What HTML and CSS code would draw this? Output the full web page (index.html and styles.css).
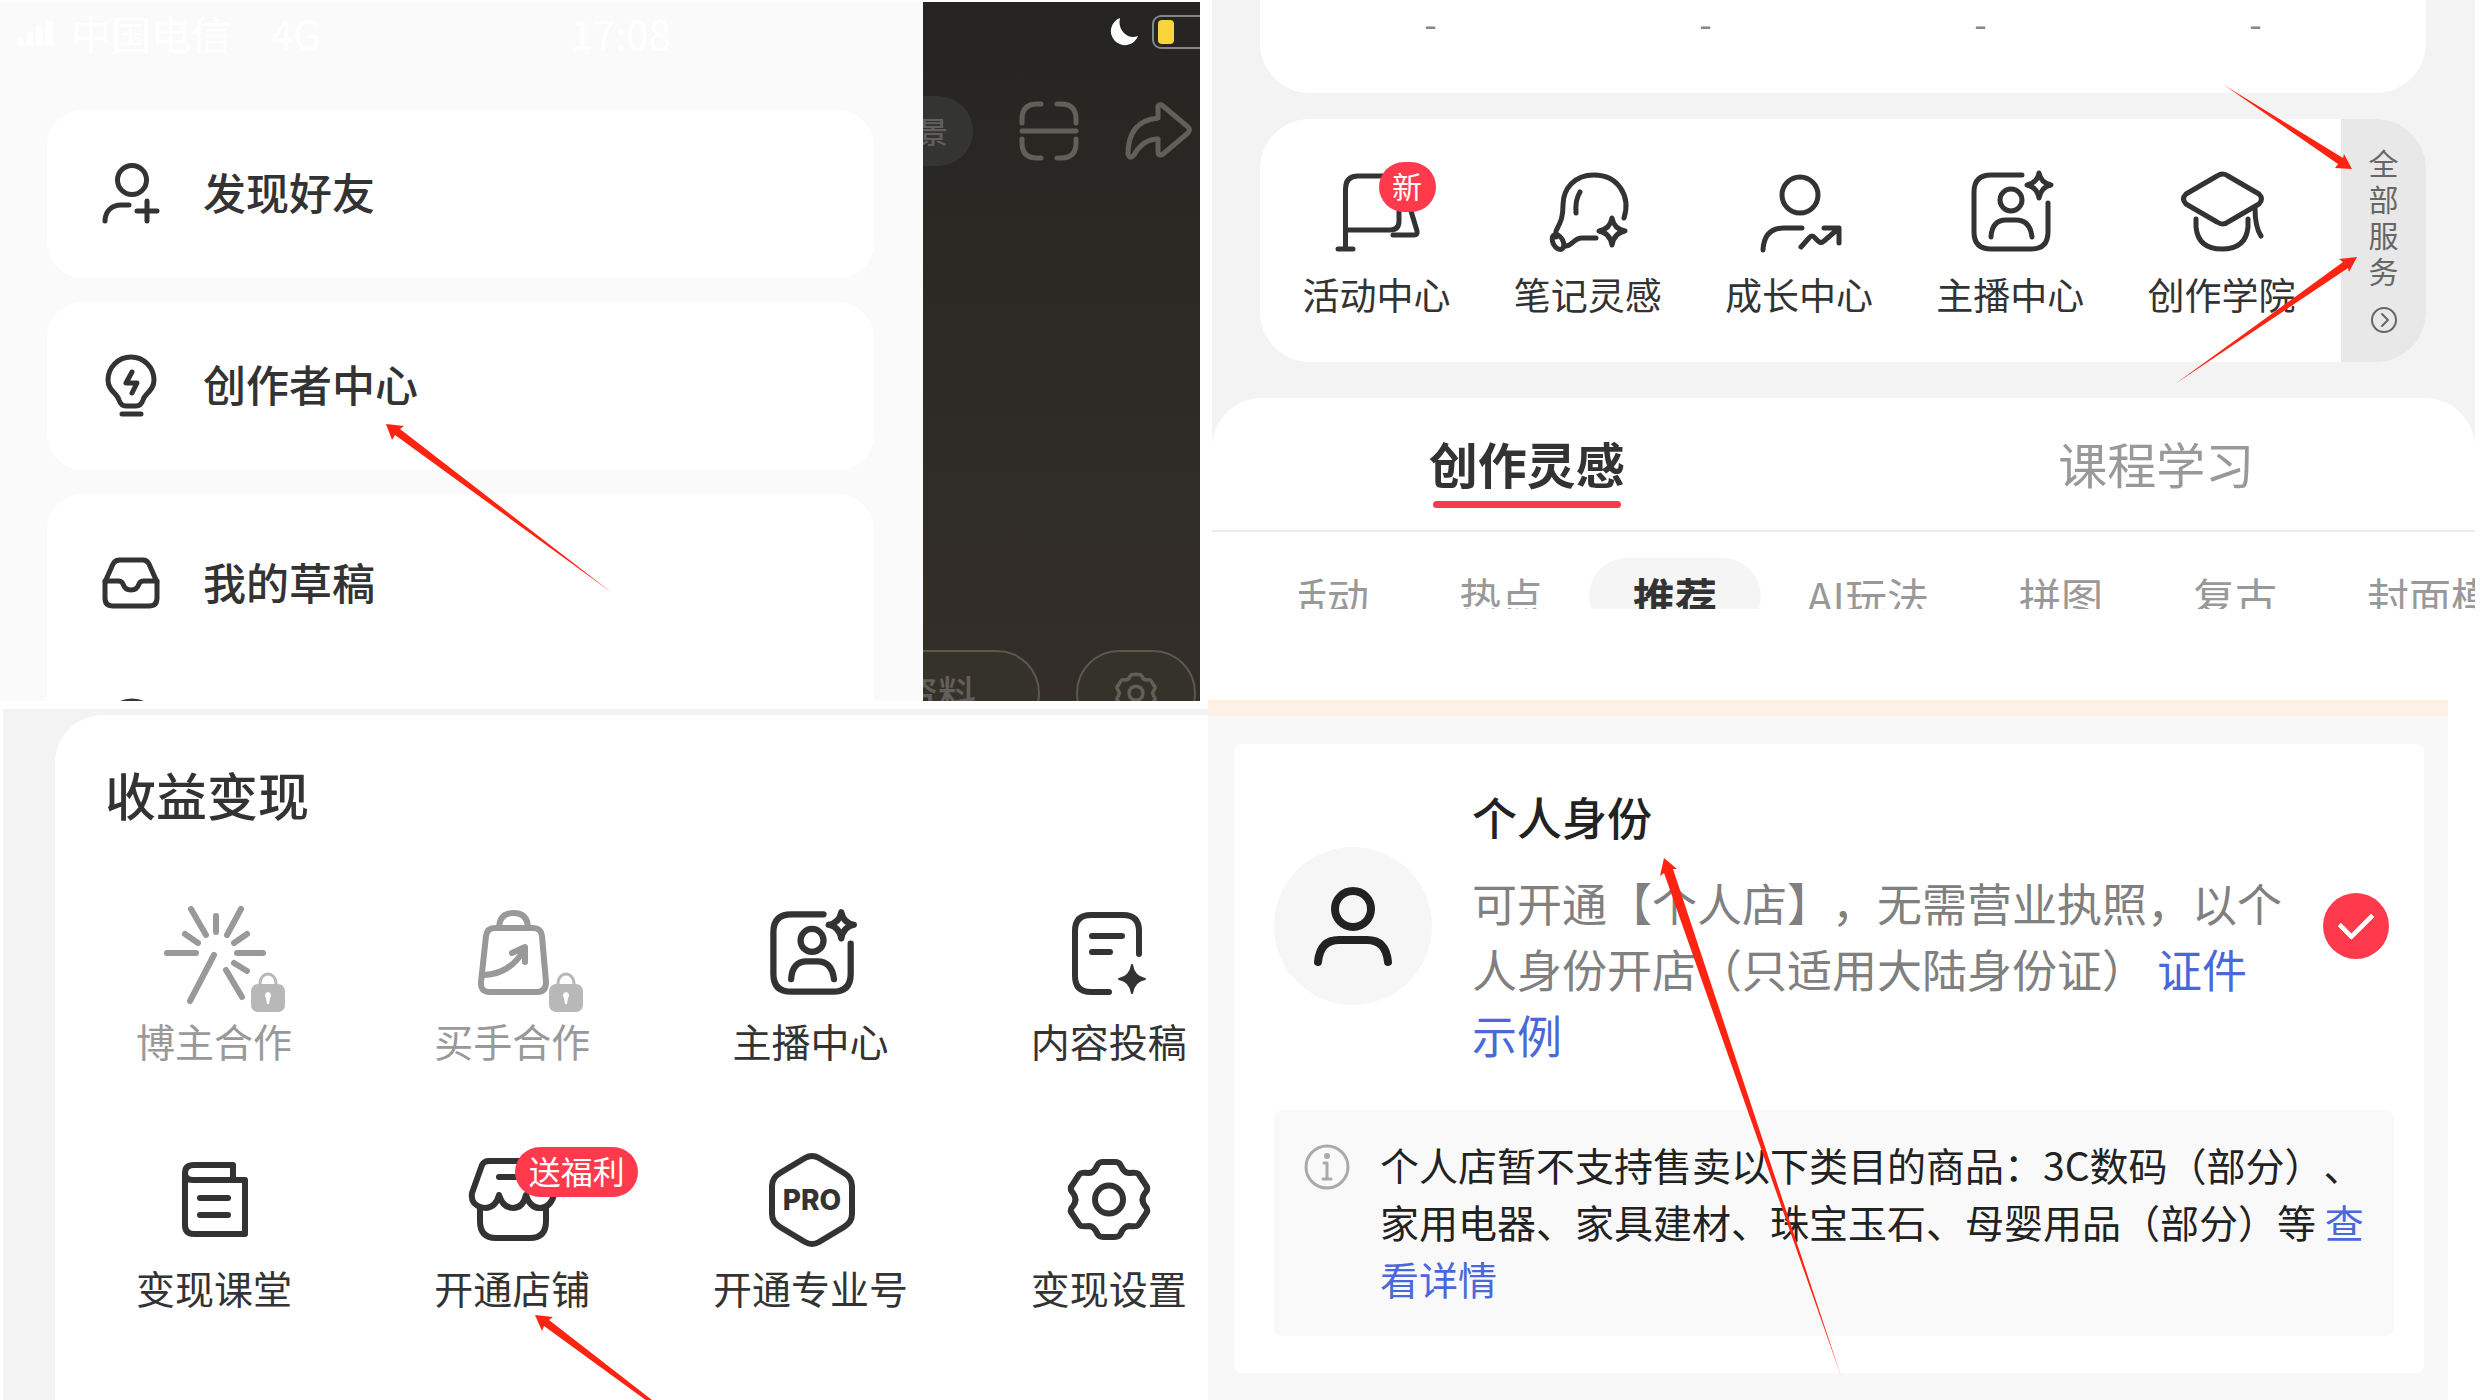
FILE: index.html
```html
<!DOCTYPE html>
<html lang="zh-CN">
<head>
    <meta charset="UTF-8">
    <meta name="viewport" content="width=device-width, initial-scale=1.0">
    <title>开通店铺流程</title>
    <link rel="stylesheet" href="styles.css">
</head>
<body>
<svg class="sprite" aria-hidden="true">
    <symbol id="icon-anchor" viewBox="0 0 90 90">
        <path d="M57 8H26Q9 8 9 25V65Q9 82 26 82H66Q83 82 83 65V36"/>
        <path d="M74 6Q76 16 86 18Q76 20 74 31Q72 20 62 18Q72 16 74 6Z"/>
        <circle cx="46" cy="33" r="11"/>
        <path d="M26 70Q27 53 41 53H51Q65 53 67 70"/>
    </symbol>
    <symbol id="icon-gear" viewBox="0 0 100 100">
        <path d="M44 13H56Q60 13 61.500 16Q65 24 70 24Q78 23 79.500 25L88 38Q89 41 86 44Q81 50.500 86 57Q89 60 88 63L79.500 76Q78 78 70 77Q65 77 61.500 85Q60 88 56 88H44Q40 88 38.500 85Q35 77 30 77Q22 78 20.500 76L12 63Q11 60 14 57Q19 50.500 14 44Q11 41 12 38L20.500 25Q22 23 30 24Q35 24 38.500 16Q40 13 44 13Z"/>
        <circle cx="50" cy="50.500" r="14"/>
    </symbol>
    <symbol id="icon-lock" viewBox="0 0 34 40">
        <path d="M9 14V11a8 9 0 0 1 16 0v3" fill="none" stroke="#b8b8b8" stroke-width="3"/>
        <rect x="0" y="12" width="34" height="28" rx="7" fill="#b8b8b8" stroke="none"/>
        <path d="M17 20a3.500 3.500 0 0 1 2 6l-1 6h-2l-1-6a3.500 3.500 0 0 1 2-6z" fill="#fff" stroke="none"/>
    </symbol>
</svg>

<div class="page">
    <div class="column column-left">
        <!-- Side menu over the profile page -->
        <section class="profile">
            <div class="drawer">
                <div class="drawer-status">
                    <svg class="signal" viewBox="0 0 40 26"><path d="M0 18h7v8H0zM10 12h7v14h-7zM20 6h7v20h-7zM30 0h8v26h-8z"/></svg>
                    <span>中国电信</span>
                    <span>4G</span>
                    <span class="drawer-time">17:08</span>
                </div>
                <nav class="menu">
                    <div class="menu-card">
                        <a href="#" class="menu-row">
                            <svg class="icon" viewBox="0 0 60 62">
                                <circle cx="31" cy="17" r="14.500"/>
                                <path d="M4 58C4 48 11 42 20 42H28M46 38V58M36 48H56"/>
                            </svg>
                            <span>发现好友</span>
                        </a>
                    </div>
                    <div class="menu-card">
                        <a href="#" class="menu-row">
                            <svg class="icon" viewBox="0 0 60 62">
                                <path d="M18 45C16 38 7 36 7 25A23 23 0 0 1 53 25C53 36 44 38 42 45Q40 51 35 51H25Q20 51 18 45Z"/>
                                <path d="M21 59H40M31 17L25 28H36L31 38"/>
                            </svg>
                            <span>创作者中心</span>
                        </a>
                    </div>
                    <div class="menu-card menu-card-list">
                        <a href="#" class="menu-row">
                            <svg class="icon" viewBox="0 0 60 62">
                                <path d="M19 7H42Q46 7 48 11L56 29V45Q56 53 48 53H12Q4 53 4 45V29L12 11Q14 7 19 7Z"/>
                                <path d="M4 28H17Q21 28 22 31Q24 37 30 37T38 31Q39 28 43 28H56"/>
                            </svg>
                            <span>我的草稿</span>
                        </a>
                        <a href="#" class="menu-row" aria-label="评论">
                            <svg class="icon" viewBox="0 0 60 62"><circle cx="31" cy="31" r="27"/></svg>
                        </a>
                    </div>
                </nav>
            </div>
            <div class="cover">
                <div class="cover-status">
                    <svg class="moon" viewBox="0 0 28 28"><path d="M10 0A14 14 0 1 0 28 18Q20 21 14 15Q8 9 10 0Z"/></svg>
                    <span class="battery"><span class="battery-level"></span></span>
                </div>
                <div class="cover-actions">
                    <button class="cover-scene">景</button>
                    <svg class="cover-icon" viewBox="0 0 60 60">
                        <path d="M3 22V18Q3 3 18 3H22M38 3H42Q57 3 57 18V22M3 38V42Q3 57 18 57H22M38 57H42Q57 57 57 42V38M3 30H57"/>
                    </svg>
                    <svg class="cover-icon cover-share" viewBox="0 0 68 60">
                        <path d="M33 5Q35 2 38 5L63 26Q66 29 63 32L38 53Q33 56 33 50V38Q18 38 9 54Q5 59 3 53Q3 20 33 17Z"/>
                    </svg>
                </div>
                <div class="cover-bottom">
                    <button class="cover-edit">资料</button>
                    <button class="cover-settings" aria-label="设置">
                        <svg class="cover-gear"><use href="#icon-gear"/></svg>
                    </button>
                </div>
            </div>
        </section>

        <!-- Monetisation tools -->
        <section class="income">
            <div class="income-card">
                <h2>收益变现</h2>
                <div class="income-grid">
                    <a href="#" class="tool tool-locked">
                        <svg class="icon" viewBox="0 0 100 100">
                            <path d="M27 7L42 33M52 14V30M77 7L63 33M21 32L34 41M83 32L70 41M3 51H32M73 51H99M50 53L26 99M62 68L78 95M70 61L83 69"/>
                            <use href="#icon-lock" x="87" y="70" width="34" height="40"/>
                        </svg>
                        博主合作
                    </a>
                    <a href="#" class="tool tool-locked">
                        <svg class="icon" viewBox="0 0 100 100">
                            <path d="M33 26H71Q79 26 80 34L84 80Q84 90 75 90H28Q18 90 19 80L24 34Q25 26 33 26Z"/>
                            <path d="M37 25Q38 11 51.500 11T66 25M22 73Q48 72 62 48M50 51L63 45V60"/>
                            <use href="#icon-lock" x="87" y="70" width="34" height="40"/>
                        </svg>
                        买手合作
                    </a>
                    <a href="#" class="tool">
                        <svg class="icon" viewBox="0 0 100 100"><use href="#icon-anchor" x="3" y="4" width="94" height="94"/></svg>
                        主播中心
                    </a>
                    <a href="#" class="tool">
                        <svg class="icon" viewBox="0 0 100 100">
                            <path d="M80 52V29Q80 13 64 13H32Q16 13 16 29V74Q16 90 32 90H50M33 34H63M33 50H51"/>
                            <path class="solid" d="M73 63Q75 75 86 77Q75 79 73 91Q71 79 60 77Q71 75 73 63Z"/>
                        </svg>
                        内容投稿
                    </a>
                    <a href="#" class="tool">
                        <svg class="icon" viewBox="0 0 100 100">
                            <path d="M29 31H81V85H30Q21 85 21 76V24Q21 16 30 16H69V31M21 24Q21 31 29 31M36 49H64M36 66H64"/>
                        </svg>
                        变现课堂
                    </a>
                    <a href="#" class="tool">
                        <span class="icon-box">
                            <svg class="icon" viewBox="0 0 100 100">
                                <path d="M92 46L82 16Q80 12 76 12H27Q22 12 20 16L10 44Q9 50 12 54Q17 59 24 59Q34 58 37 46Q41 59 51 59T64 46Q68 59 78 59T92 46M37 28H65"/>
                                <path d="M18 59V72Q18 89 34 89H68Q84 89 84 72V59"/>
                            </svg>
                            <span class="badge badge-wide">送福利</span>
                        </span>
                        开通店铺
                    </a>
                    <a href="#" class="tool">
                        <svg class="icon" viewBox="0 0 100 100">
                            <path d="M44 9Q51 5 58 9L83 24Q91 29 91 37V65Q91 73 83 78L58 93Q51 97 44 93L19 78Q11 73 11 65V37Q11 29 19 24Z"/>
                            <text class="pro" x="51" y="61">PRO</text>
                        </svg>
                        开通专业号
                    </a>
                    <a href="#" class="tool">
                        <svg class="icon"><use href="#icon-gear"/></svg>
                        变现设置
                    </a>
                </div>
            </div>
        </section>
    </div>

    <div class="column column-right">
        <!-- Creator centre -->
        <section class="creator">
            <div class="stats">
                <span>-</span><span>-</span><span>-</span><span>-</span>
            </div>
            <div class="services">
                <div class="services-list">
                    <a href="#" class="service">
                        <span class="icon-box">
                            <svg class="icon" viewBox="0 0 90 90">
                                <path d="M13.500 80V22Q13.500 9 26 9H60M13.500 63H58Q67 63 67 54V36M79 44L85 64Q86 68 82 68H61M6 82H21"/>
                            </svg>
                            <span class="badge">新</span>
                        </span>
                        活动中心
                    </a>
                    <a href="#" class="service">
                        <svg class="icon" viewBox="0 0 90 90">
                            <path d="M81 51C88 29 75 8 51 8C31 8 20 22 20 38C20 52 17 56 13 64V70M37 25Q32 33 33 46M22 79C29 80 30 71 39 71H53"/>
                            <ellipse cx="15" cy="75" rx="5" ry="8" transform="rotate(-28 15 75)"/>
                            <path d="M69 51Q71 62 82 64Q71 66 69 78Q67 66 56 64Q67 62 69 51Z"/>
                        </svg>
                        笔记灵感
                    </a>
                    <a href="#" class="service">
                        <svg class="icon" viewBox="0 0 90 90">
                            <circle cx="46" cy="28" r="18"/>
                            <path d="M9 83Q10 61 30 61H48M47 80L55 71Q58 67 61 71L64 74Q67 77 70 74L84 62M70 61H85V76"/>
                        </svg>
                        成长中心
                    </a>
                    <a href="#" class="service">
                        <svg class="icon"><use href="#icon-anchor"/></svg>
                        主播中心
                    </a>
                    <a href="#" class="service">
                        <svg class="icon" viewBox="0 0 90 90">
                            <path d="M41 9Q47 5 52 9L83 27Q88 32 83 37L52 55Q47 59 41 55L10 37Q5 32 10 27Z"/>
                            <path d="M20 52V60Q22 82 46 82T72 60V52M79 41Q79 60 85 69"/>
                        </svg>
                        创作学院
                    </a>
                </div>
                <button class="services-all">
                    <span>全部服务</span>
                    <svg viewBox="0 0 28 28"><circle cx="14" cy="14" r="12"/><path d="M12 8L18 14L12 20"/></svg>
                </button>
            </div>
            <div class="feed">
                <div class="feed-tabs">
                    <button class="feed-tab active">创作灵感</button>
                    <button class="feed-tab">课程学习</button>
                </div>
                <div class="topics">
                    <div class="topics-track">
                        <button class="topic">活动</button>
                        <button class="topic">热点</button>
                        <button class="topic active">推荐</button>
                        <button class="topic">AI玩法</button>
                        <button class="topic">拼图</button>
                        <button class="topic">复古</button>
                        <button class="topic">封面模板</button>
                    </div>
                </div>
            </div>
        </section>

        <!-- Shop identity -->
        <section class="identity">
            <div class="identity-card">
                <div class="identity-main">
                    <div class="avatar">
                        <svg viewBox="0 0 80 80">
                            <circle cx="40" cy="23" r="18"/>
                            <path d="M5 76Q7 54 26 54H54Q73 54 75 76"/>
                        </svg>
                    </div>
                    <div class="identity-text">
                        <label for="personal">个人身份</label>
                        <p>可开通【个人店】，无需营业执照，以个人身份开店（只适用大陆身份证） <a href="#">证件示例</a></p>
                    </div>
                    <input type="radio" id="personal" name="identity" class="check" checked>
                </div>
                <div class="notice">
                    <svg viewBox="0 0 46 46"><circle cx="23" cy="23" r="21"/><path d="M20 19H23V34M19 35H27"/><circle class="dot" cx="23" cy="12" r="3"/></svg>
                    <p>个人店暂不支持售卖以下类目的商品：3C数码（部分）、家用电器、家具建材、珠宝玉石、母婴用品（部分）等 <a href="#">查看详情</a></p>
                </div>
            </div>
        </section>
    </div>

    <!-- Red pointers between the steps -->
    <svg class="pointers" viewBox="0 0 2480 1400" preserveAspectRatio="none" aria-hidden="true">
        <path d="M386 424L404 426L400 429L611 592L395 435L392 440Z"/>
        <path d="M2352 169L2344 154L2343 158L2224 85L2338 164L2335 168Z"/>
        <path d="M2357 257L2349 272L2348 268L2175 384L2343 262L2339 259Z"/>
        <path d="M535 1315L553 1317L549 1320L746 1473L544 1326L542 1331Z"/>
        <path d="M1664 858L1677 869L1673 869L1841 1376L1664 873L1660 876Z"/>
    </svg>
</div>
</body>
</html>
```
FILE: styles.css
```css
* {
    box-sizing: border-box;
}

body {
    margin: 0;
    background: #fff;
    color: #333;
    font-family: "Noto Sans CJK SC", "Noto Sans", sans-serif;
    text-spacing-trim: space-all;
}

a {
    color: inherit;
    text-decoration: none;
}

button {
    padding: 0;
    border: none;
    background: none;
    color: inherit;
    font: inherit;
}

h2,
p {
    margin: 0;
}

svg {
    display: block;
    flex-shrink: 0;
    fill: none;
    stroke: currentColor;
    stroke-linecap: round;
    stroke-linejoin: round;
}

.sprite {
    position: absolute;
    width: 0;
    height: 0;
}

.page {
    position: relative;
    display: grid;
    grid-template-columns: 1208fr 1272fr;
    height: 100vh;
    overflow: hidden;
}

.column {
    display: grid;
    grid-template-columns: minmax(0, 1fr);
    min-width: 0;
    min-height: 0;
}

.column-left {
    grid-template-rows: minmax(0, 701fr) minmax(0, 691fr);
    gap: 8px;
}

.column-right {
    grid-template-rows: minmax(0, 609fr) minmax(0, 700fr);
    gap: 91px;
}

.icon {
    width: 100%;
    height: 100%;
    overflow: visible;
}

.icon-box {
    position: relative;
}

.badge {
    position: absolute;
    top: -5px;
    left: 47px;
    width: 57px;
    padding-bottom: 4px;
    border-radius: 26px;
    background: #ff3a4c;
    color: #fff;
    font-size: 30px;
    line-height: 46px;
    text-align: center;
}

.badge-wide {
    top: -2px;
    left: 53px;
    width: 123px;
    font-size: 32px;
}

/* Side menu */
.profile {
    display: grid;
    grid-template-columns: minmax(0, 923fr) minmax(0, 277fr);
    grid-template-rows: minmax(0, 1fr);
    margin: 2px 8px 0 0;
    overflow: hidden;
}

.drawer {
    padding: 0 49px 0 47px;
    background: #fafafa;
}

.drawer-status {
    display: flex;
    align-items: center;
    gap: 40px;
    height: 108px;
    margin: 0 0 0 -30px;
    padding-bottom: 46px;
    color: #fff;
    font-size: 40px;
}

.signal {
    width: 38px;
    height: 26px;
    margin-right: -24px;
    fill: #fff;
    stroke: none;
}

.drawer-time {
    margin-left: 210px;
}

.menu {
    display: flex;
    flex-direction: column;
    gap: 24px;
}

.menu-card {
    padding: 12px 0;
    border-radius: 36px;
    background: #fff;
}

.menu-card-list {
    padding-top: 18px;
}

.menu-row {
    display: flex;
    align-items: center;
    gap: 42px;
    height: 144px;
    padding-left: 54px;
    font-size: 43px;
    font-weight: 500;
}

.menu-row span {
    padding-bottom: 6px;
}

.menu-row .icon {
    width: 60px;
    height: 62px;
    stroke-width: 5;
}

/* Dimmed cover next to the menu */
.cover {
    display: flex;
    flex-direction: column;
    overflow: hidden;
    background: linear-gradient(#252422, #2d2a25 45%, #332e28);
    color: #625f5b;
}

.cover-status {
    display: flex;
    align-items: center;
    gap: 14px;
    height: 60px;
    padding-left: 187px;
}

.moon {
    width: 28px;
    height: 28px;
    fill: #fff;
    stroke: none;
}

.battery {
    flex-shrink: 0;
    width: 74px;
    height: 34px;
    padding: 3px 4px;
    border: 2px solid #858585;
    border-radius: 9px;
}

.battery-level {
    display: block;
    width: 16px;
    height: 24px;
    border-radius: 4px;
    background: #f8d53b;
}

.cover-actions {
    display: flex;
    align-items: center;
    gap: 46px;
    margin-top: 34px;
}

.cover-scene {
    display: flex;
    flex-shrink: 0;
    align-items: center;
    justify-content: flex-end;
    width: 50px;
    height: 70px;
    padding: 0 25px 3px 0;
    border-radius: 0 35px 35px 0;
    background: #343432;
    font-size: 30px;
    font-weight: 500;
}

.cover-icon {
    width: 60px;
    height: 60px;
    stroke-width: 5;
}

.cover-share {
    width: 68px;
}

.cover-bottom {
    display: flex;
    justify-content: space-between;
    height: 51px;
    margin-top: auto;
    padding-right: 4px;
}

.cover-edit,
.cover-settings {
    display: flex;
    align-items: center;
    justify-content: flex-end;
    width: 117px;
    height: 86px;
    padding: 0 62px 4px 0;
    border: 2px solid #5a5852;
    border-left: none;
    border-radius: 0 60px 60px 0;
    background: #35322a;
    font-size: 38px;
    font-weight: 500;
    white-space: nowrap;
}

.cover-settings {
    justify-content: center;
    width: 120px;
    padding: 0;
    border-left: 2px solid #5a5852;
    border-radius: 60px;
}

.cover-gear {
    width: 50px;
    height: 50px;
    stroke-width: 7;
}

/* Monetisation tools */
.income {
    margin-left: 3px;
    padding: 6px 0 0 52px;
    overflow: hidden;
    background: #f3f3f3;
}

.income-card {
    height: 100%;
    padding-top: 46px;
    border-radius: 48px 0 0 0;
    background: #fff;
}

.income-card h2 {
    padding-left: 50px;
    font-size: 51px;
    font-weight: 500;
    line-height: 66px;
}

.income-grid {
    display: grid;
    grid-template-columns: repeat(4, 1fr);
    gap: 81px 0;
    margin: 75px -50px 0 10px;
}

.tool {
    display: flex;
    flex-direction: column;
    align-items: center;
    gap: 10px;
    font-size: 39px;
    line-height: 56px;
    white-space: nowrap;
}

.tool .icon {
    width: 100px;
    height: 100px;
    stroke-width: 6;
}

.tool-locked {
    color: #999;
}

.tool .solid {
    fill: currentColor;
    stroke-width: 2;
}

.pro {
    fill: currentColor;
    stroke: none;
    font-family: Inter, "Liberation Sans", sans-serif;
    font-size: 28px;
    font-weight: 800;
    text-anchor: middle;
}

/* Creator centre */
.creator {
    display: flex;
    flex-direction: column;
    margin: 0 5px 0 4px;
    overflow: hidden;
    background: #f3f3f3;
}

.stats {
    display: grid;
    flex-shrink: 0;
    grid-template-columns: repeat(4, 1fr);
    height: 93px;
    margin: 0 49px 0 48px;
    padding: 0 33px;
    border-radius: 0 0 50px 50px;
    background: #fff;
    color: #888;
    font-size: 36px;
    line-height: 44px;
    text-align: center;
}

.services {
    display: flex;
    flex-shrink: 0;
    margin: 26px 49px 0 48px;
    overflow: hidden;
    border-radius: 50px;
    background: #fff;
}

.services-list {
    display: grid;
    flex: 1;
    grid-template-columns: repeat(5, 1fr);
    padding: 48px 14px 42px 11px;
}

.service {
    display: flex;
    flex-direction: column;
    align-items: center;
    gap: 11px;
    font-size: 37px;
    line-height: 52px;
    white-space: nowrap;
}

.service .icon {
    width: 90px;
    height: 90px;
    stroke-width: 5;
}

.services-all {
    display: flex;
    flex-direction: column;
    align-items: center;
    justify-content: center;
    gap: 18px;
    width: 85px;
    padding-bottom: 4px;
    background: #e8e8e8;
    color: #666;
    font-size: 30px;
    line-height: 36px;
}

.services-all span {
    width: 30px;
}

.services-all svg {
    width: 28px;
    height: 28px;
    stroke-width: 2;
}

.feed {
    flex: 1;
    min-height: 0;
    margin-top: 36px;
    border-radius: 50px 50px 0 0;
    background: #fff;
}

.feed-tabs {
    display: grid;
    grid-template-columns: 1fr 1fr;
    justify-items: center;
    padding: 35px 4px 22px 0;
    border-bottom: 2px solid #ececec;
}

.feed-tab {
    color: #999;
    font-size: 49px;
    line-height: 60px;
}

.feed-tab::after {
    content: "";
    display: block;
    height: 7px;
    margin: 8px 4px 0;
    border-radius: 4px;
}

.feed-tab.active {
    color: #333;
    font-weight: 700;
}

.feed-tab.active::after {
    background: #f93a4e;
}

.topics {
    margin-left: 87px;
    padding-top: 26px;
    overflow: hidden;
}

.topics-track {
    display: flex;
    gap: 2px;
    margin-left: -58px;
}

.topic {
    flex-shrink: 0;
    padding: 0 44px;
    border-radius: 38px;
    color: #999;
    font-size: 42px;
    line-height: 76px;
}

.topic.active {
    background: #f5f5f5;
    color: #333;
    font-weight: 700;
}

/* Shop identity */
.identity {
    margin-right: 32px;
    padding: 28px 24px 27px 26px;
    overflow: hidden;
    border-top: 16px solid #fff0e5;
    background: #f9f8f9;
}

.identity-card {
    height: 100%;
    padding: 40px 30px 38px 40px;
    border-radius: 8px;
    background: #fff;
}

.identity-main {
    display: flex;
    align-items: center;
    gap: 40px;
    padding-right: 5px;
}

.avatar {
    display: flex;
    flex-shrink: 0;
    align-items: center;
    justify-content: center;
    width: 158px;
    height: 158px;
    border-radius: 50%;
    background: #f6f6f6;
    color: #222;
}

.avatar svg {
    width: 80px;
    height: 80px;
    stroke-width: 8;
}

.identity-text {
    flex: 1;
    color: #808080;
    font-size: 45px;
    line-height: 66px;
}

.identity-text label {
    display: block;
    margin-bottom: 20px;
    color: #222;
    font-weight: 500;
}

.identity a {
    color: #4a69d8;
}

.check {
    display: flex;
    flex-shrink: 0;
    justify-content: center;
    width: 66px;
    height: 66px;
    margin: 0 0 0 -8px;
    border-radius: 50%;
    background: #ff3a4c;
    appearance: none;
}

.check::after {
    content: "";
    width: 15px;
    height: 28px;
    margin-top: 12px;
    border: solid #fff;
    border-width: 0 5px 5px 0;
    border-radius: 2px;
    transform: rotate(45deg);
}

.notice {
    display: flex;
    gap: 30px;
    margin-top: 42px;
    padding: 26px 16px 29px 30px;
    border-radius: 8px;
    background: #f9f9f9;
    color: #222;
    font-size: 39px;
    line-height: 57px;
}

.notice svg {
    width: 46px;
    height: 46px;
    margin-top: 8px;
    color: #aaa;
    stroke-width: 3;
}

.notice .dot {
    fill: currentColor;
    stroke: none;
}

.pointers {
    position: absolute;
    inset: 0;
    width: 100%;
    height: 100%;
    fill: #ff2312;
    stroke: none;
    pointer-events: none;
}
```
